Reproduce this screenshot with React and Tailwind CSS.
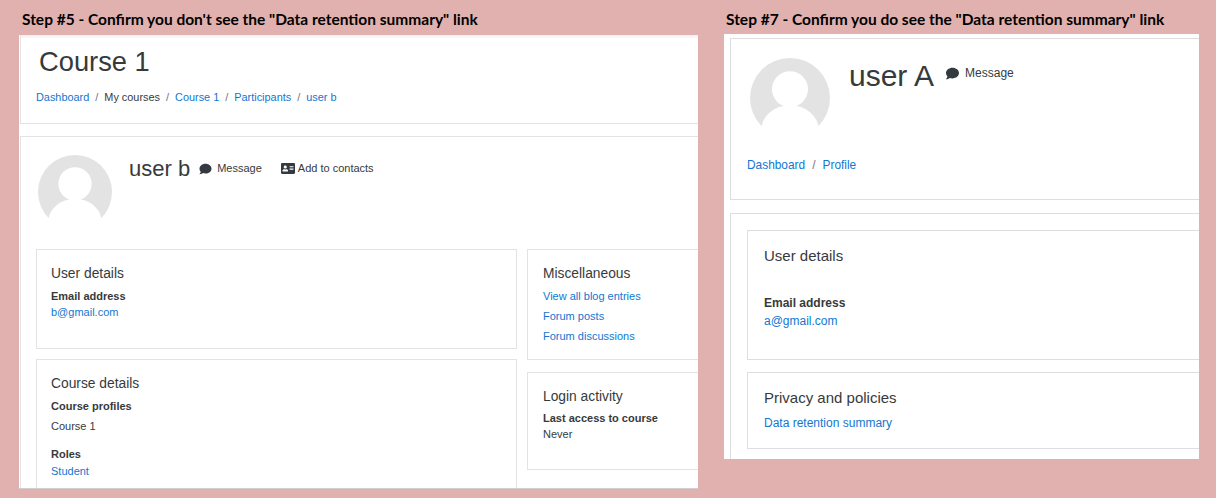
import React from "react";
import { FaComment, FaAddressCard } from "react-icons/fa";

const Avatar = ({ className }) => (
  <svg viewBox="0 0 100 100" className={className}>
    <circle cx="50" cy="50" r="50" fill="#e3e3e3" />
    <circle cx="50" cy="39" r="22.5" fill="#fff" />
    <ellipse cx="50" cy="90" rx="36" ry="31" fill="#fff" />
  </svg>
);

const A = ({ children, className = "" }) => (
  <a className={`text-[#1177d1] ${className}`}>{children}</a>
);
const Sep = ({ className = "" }) => <span className={`text-[#6c757d] ${className}`}>/</span>;

export default function App() {
  return (
    <div
      className="flex h-[498px] w-[1216px] overflow-hidden bg-[#e0b1ae] text-[#373a3c]"
      style={{ fontFamily: '"Liberation Sans", Arial, sans-serif' }}
    >
      {/* Left */}
      <div className="ml-[19px] flex w-[679px] flex-col">
        <div
          className="ml-[3px] flex h-[35px] items-start pt-[11px] text-[15.5px] font-bold leading-[17px] text-black"
          style={{ fontFamily: 'Lato, sans-serif' }}
        >
          Step #5 - Confirm you don't see the "Data retention summary" link
        </div>
        <div className="h-[454px] overflow-hidden border-b border-[#cfcfcf] bg-white pl-px">
          <div className="h-[89px] border-b border-l border-[#e3e3e3] bg-gradient-to-b from-[#f0f0f0] to-white to-[4px] pl-[18px]">
            <div className="pt-[9px] text-[27.3px] leading-[36px]">Course 1</div>
            <div className="-ml-[3px] mt-[9px] flex gap-[6px] text-[10.9px] leading-[16px]">
              <A>Dashboard</A><Sep /><span>My courses</span><Sep /><A>Course 1</A><Sep /><A>Participants</A><Sep /><A>user b</A>
            </div>
          </div>
          <div className="mt-[12px] h-[400px] border-l border-t border-[#e3e3e3] pl-[15px]">
            <div className="flex h-[112px] items-start pt-[18px]">
              <Avatar className="ml-[2px] h-[74px] w-[74px] shrink-0" />
              <div className="ml-[17px] flex items-center">
                <span className="pt-px text-[22px] leading-[26px]">user b</span>
                <FaComment className="ml-[9px] h-[12px] w-[13px] text-[#343a40]" />
                <span className="ml-[5px] text-[11px]">Message</span>
                <FaAddressCard className="ml-[19px] h-[13px] w-[14px] text-[#343a40]" />
                <span className="ml-[3px] text-[11px]">Add to contacts</span>
              </div>
            </div>
            <div className="flex gap-[10px]">
              <div className="w-[481px] shrink-0">
                <div className="h-[100px] border border-[#e3e3e3] px-[14px] pt-[15px]">
                  <h3 className="text-[13.8px] leading-[18px]">User details</h3>
                  <div className="mt-[5px] text-[11px] font-bold leading-[16px]">Email address</div>
                  <A className="block text-[11px] leading-[17px]">b@gmail.com</A>
                </div>
                <div className="mt-[10px] h-[140px] border border-[#e3e3e3] px-[14px] pt-[15px]">
                  <h3 className="text-[13.8px] leading-[18px]">Course details</h3>
                  <div className="mt-[5px] text-[11px] font-bold leading-[16px]">Course profiles</div>
                  <div className="mt-[4px] text-[11px] leading-[16px]">Course 1</div>
                  <div className="mt-[12px] text-[11px] font-bold leading-[16px]">Roles</div>
                  <A className="block pt-px text-[11px] leading-[17px]">Student</A>
                </div>
              </div>
              <div className="w-[200px] shrink-0">
                <div className="h-[111px] border border-[#e3e3e3] px-[15px] pt-[15px]">
                  <h3 className="text-[13.8px] leading-[18px]">Miscellaneous</h3>
                  <div className="mt-[5px] flex flex-col gap-[4px] text-[11px] leading-[16px]">
                    <A>View all blog entries</A>
                    <A>Forum posts</A>
                    <A>Forum discussions</A>
                  </div>
                </div>
                <div className="mt-[12px] h-[98px] border border-[#e3e3e3] px-[15px] pt-[15px]">
                  <h3 className="text-[13.8px] leading-[18px]">Login activity</h3>
                  <div className="mt-[4px] text-[11px] font-bold leading-[16px]">Last access to course</div>
                  <div className="text-[11px] leading-[17px]">Never</div>
                </div>
              </div>
            </div>
          </div>
        </div>
      </div>

      {/* Right */}
      <div className="ml-[26px] flex w-[475px] flex-col">
        <div
          className="ml-[2px] flex h-[34px] items-start pt-[11px] text-[15.5px] font-bold leading-[17px] text-black"
          style={{ fontFamily: 'Lato, sans-serif' }}
        >
          Step #7 - Confirm you do see the "Data retention summary" link
        </div>
        <div className="h-[425px] overflow-hidden bg-white pl-[6px] pt-[4px]">
          <div className="h-[162px] border-b border-l border-t border-[#dedede] pl-[16px]">
            <div className="flex items-start pt-[19px]">
              <Avatar className="ml-[3px] h-[80px] w-[80px] shrink-0" />
              <span className="ml-[19px] text-[30px] leading-[36px]">user A</span>
              <FaComment className="ml-[12px] mt-[9px] h-[13px] w-[13px] text-[#343a40]" />
              <span className="ml-[6px] mt-[7px] text-[12px] leading-[16px]">Message</span>
            </div>
            <div className="mt-[18px] flex gap-[7px] text-[11.9px] leading-[18px]">
              <A>Dashboard</A><Sep /><A>Profile</A>
            </div>
          </div>
          <div className="mt-[13px] h-[250px] border-l border-t border-[#dedede] pl-[16px] pt-[16px]">
            <div className="h-[130px] border-b border-l border-t border-[#dedede] pl-[16px] pt-[15px]">
              <h3 className="text-[15px] leading-[20px]">User details</h3>
              <div className="mt-[28px] text-[12px] font-bold leading-[18px]">Email address</div>
              <A className="block text-[12px] leading-[18px]">a@gmail.com</A>
            </div>
            <div className="mt-[12px] h-[77px] border-b border-l border-t border-[#dedede] pl-[16px] pt-[15px]">
              <h3 className="text-[15px] leading-[20px]">Privacy and policies</h3>
              <A className="mt-[6px] block text-[12px] leading-[18px]">Data retention summary</A>
            </div>
          </div>
        </div>
      </div>
    </div>
  );
}
